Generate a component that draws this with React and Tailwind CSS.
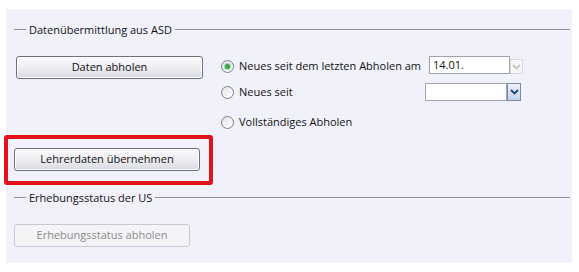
import React from "react";

function Radio({ checked }) {
  return (
    <span className="relative inline-flex w-[13px] h-[13px] rounded-full border border-[#7b7f8c] bg-gradient-to-br from-[#e4e4ea] to-white items-center justify-center shrink-0">
      {checked && <span className="w-[5px] h-[5px] rounded-full bg-[#3fa34d] shadow-[0_0_1px_1px_#9fd6a4]" />}
    </span>
  );
}

function Chevron({ color }) {
  return (
    <svg width="9" height="6" viewBox="0 0 9 6">
      <path d="M1 1 L4.5 4.5 L8 1" fill="none" stroke={color} strokeWidth="1.8" />
    </svg>
  );
}

function Legend({ text }) {
  return (
    <div className="flex items-center h-[16px]">
      <div className="ml-[8px] w-[12px] h-px bg-[#8e8e9c]" />
      <span className="px-[3px] text-[11px] text-[#111111] leading-none whitespace-nowrap">{text}</span>
      <div className="flex-1 h-px bg-[#8e8e9c] mr-[2px]" />
    </div>
  );
}

function Btn({ children, w, disabled }) {
  return (
    <div
      className={
        "h-[23px] rounded-[3px] border flex items-center justify-center text-[11px] whitespace-nowrap " +
        (disabled
          ? "border-[#c8c8d0] bg-[#f4f4f7] text-[#8b8b8b]"
          : "border-[#6d7180] bg-gradient-to-b from-[#fbfbfc] via-[#eeeef2] to-[#d9dae0] text-[#111111] shadow-[inset_0_0_0_1px_#ffffff]")
      }
      style={{ width: w }}
    >
      {children}
    </div>
  );
}

export default function App() {
  return (
    <div className="w-[579px] h-[272px] bg-white overflow-hidden font-['Open_Sans',sans-serif]">
      <div className="ml-[6px] mt-[9px] w-[566px] h-[254px] bg-[#f1f1fb] pt-[12px]">
        <Legend text="Datenübermittlung aus ASD" />
        <div className="flex mt-[19px]">
          <div className="ml-[10px]">
            <Btn w={187}>Daten abholen</Btn>
          </div>
          <div className="ml-[18px] w-[302px] text-[11px] text-[#111111] whitespace-nowrap">
            <div className="flex items-start h-[23px]">
              <div className="flex items-center gap-[5px] mt-[2px]">
                <Radio checked />
                <span>Neues seit dem letzten Abholen am</span>
              </div>
              <div className="ml-auto flex items-start">
                <div className="w-[81px] h-[18px] border border-[#9fa3b3] bg-white flex items-center pl-[3px] text-[11px]">
                  14.01.
                </div>
                <div className="w-[13px] h-[15px] mt-[3px] border border-[#d8d8e0] bg-[#f6f6f9] flex items-center justify-center">
                  <Chevron color="#c6c6cf" />
                </div>
              </div>
            </div>
            <div className="flex items-center h-[20px] mt-[3px]">
              <div className="flex items-center gap-[5px]">
                <Radio />
                <span>Neues seit</span>
              </div>
              <div className="ml-auto flex items-stretch h-[18px] mr-[2px]">
                <div className="w-[82px] border border-[#9fa3b3] bg-white" />
                <div className="w-[14px] border border-[#7d8aa8] bg-gradient-to-b from-[#eef3fb] to-[#c2d1ea] flex items-center justify-center">
                  <Chevron color="#1f3f7a" />
                </div>
              </div>
            </div>
            <div className="flex items-center h-[20px] mt-[10px]">
              <div className="flex items-center gap-[5px]">
                <Radio />
                <span>Vollständiges Abholen</span>
              </div>
            </div>
          </div>
        </div>
        <div className="ml-[-2px] mt-[3px] w-[209px] h-[50px] border-[4px] border-[#e2121b] rounded-[3px] pl-[6px] pt-[9px]">
          <Btn w={186}>Lehrerdaten übernehmen</Btn>
        </div>
        <div className="mt-[4px]">
          <Legend text="Erhebungsstatus der US" />
        </div>
        <div className="ml-[8px] mt-[19px]">
          <Btn w={176} disabled>Erhebungsstatus abholen</Btn>
        </div>
      </div>
    </div>
  );
}
